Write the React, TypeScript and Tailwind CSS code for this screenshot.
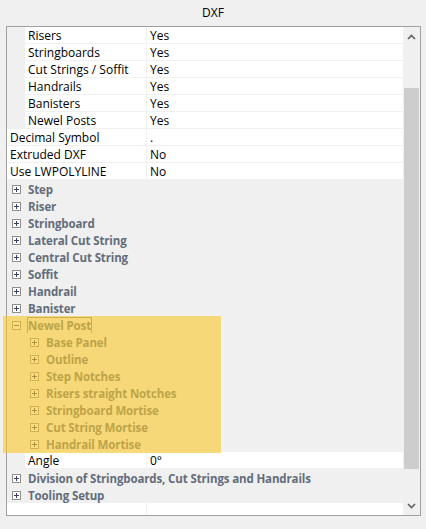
import React from "react";

type Row =
  | { kind: "prop"; name: string; value: string; indent: boolean }
  | { kind: "cat"; name: string; level: number; expanded?: boolean; focus?: boolean }
  | { kind: "empty" };

const rows: Row[] = [
  { kind: "prop", name: "Risers", value: "Yes", indent: true },
  { kind: "prop", name: "Stringboards", value: "Yes", indent: true },
  { kind: "prop", name: "Cut Strings / Soffit", value: "Yes", indent: true },
  { kind: "prop", name: "Handrails", value: "Yes", indent: true },
  { kind: "prop", name: "Banisters", value: "Yes", indent: true },
  { kind: "prop", name: "Newel Posts", value: "Yes", indent: true },
  { kind: "prop", name: "Decimal Symbol", value: ".", indent: false },
  { kind: "prop", name: "Extruded DXF", value: "No", indent: false },
  { kind: "prop", name: "Use LWPOLYLINE", value: "No", indent: false },
  { kind: "cat", name: "Step", level: 0 },
  { kind: "cat", name: "Riser", level: 0 },
  { kind: "cat", name: "Stringboard", level: 0 },
  { kind: "cat", name: "Lateral Cut String", level: 0 },
  { kind: "cat", name: "Central Cut String", level: 0 },
  { kind: "cat", name: "Soffit", level: 0 },
  { kind: "cat", name: "Handrail", level: 0 },
  { kind: "cat", name: "Banister", level: 0 },
  { kind: "cat", name: "Newel Post", level: 0, expanded: true, focus: true },
  { kind: "cat", name: "Base Panel", level: 1 },
  { kind: "cat", name: "Outline", level: 1 },
  { kind: "cat", name: "Step Notches", level: 1 },
  { kind: "cat", name: "Risers straight Notches", level: 1 },
  { kind: "cat", name: "Stringboard Mortise", level: 1 },
  { kind: "cat", name: "Cut String Mortise", level: 1 },
  { kind: "cat", name: "Handrail Mortise", level: 1 },
  { kind: "prop", name: "Angle", value: "0°", indent: true },
  { kind: "cat", name: "Division of Stringboards, Cut Strings and Handrails", level: 0 },
  { kind: "cat", name: "Tooling Setup", level: 0 },
  { kind: "empty" },
];

function ExpandBox({ expanded }: { expanded?: boolean }) {
  return (
    <svg width="9" height="9" viewBox="0 0 9 9" className="mt-[1px] shrink-0">
      <rect x="0.5" y="0.5" width="8" height="8" fill="#ffffff" stroke="#8f8f8f" />
      <line x1="2" y1="4.5" x2="7" y2="4.5" stroke="#3a3f66" />
      {!expanded && <line x1="4.5" y1="2" x2="4.5" y2="7" stroke="#3a3f66" />}
    </svg>
  );
}

function GridRow({ row }: { row: Row }) {
  if (row.kind === "prop") {
    return (
      <div className="flex h-[17px] shrink-0">
        {row.indent && <div className="w-[18px] shrink-0 bg-[#f0f0f0]" />}
        <div
          className={`${row.indent ? "w-[122px]" : "w-[140px]"} shrink-0 border-b border-r border-[#f0f0f0] bg-white pl-[3px] pt-[1px] text-[12px] leading-[16px] text-black`}
        >
          {row.name}
        </div>
        <div className="flex-1 border-b border-[#f0f0f0] bg-white pl-[3px] pt-[1px] text-[12px] leading-[16px] text-black">
          {row.value}
        </div>
      </div>
    );
  }
  if (row.kind === "empty") {
    return (
      <div className="flex flex-1">
        <div className="w-[140px] shrink-0 border-r border-[#f0f0f0] bg-white" />
        <div className="flex-1 bg-white" />
      </div>
    );
  }
  return (
    <div
      className={`flex h-[17px] shrink-0 items-center bg-[#f0f0f0] pt-[1px] ${row.level === 1 ? "pl-[23px]" : "pl-[5px]"}`}
    >
      <ExpandBox expanded={row.expanded} />
      <span
        className={`whitespace-nowrap text-[11.5px] font-bold leading-[15px] tracking-[-0.13px] text-[#636d7b] ${row.focus ? "ml-[6px] border border-[#8a8a8a]" : "ml-[7px]"}`}
      >
        {row.name}
      </span>
    </div>
  );
}

export default function App() {
  return (
    <div
      className="relative h-[529px] w-[426px] overflow-hidden bg-[#f0f0f0]"
      style={{ fontFamily: '"Open Sans", "Noto Sans", sans-serif' }}
    >
      <div className="flex h-[26px] items-center justify-center pb-[1px] text-[12px] text-black">DXF</div>
      <div className="ml-[6px] flex h-[490px] w-[415px] border border-[#a0a0a0] bg-white">
        <div className="flex w-[396px] flex-col">
          {rows.map((r, i) => (
            <GridRow key={i} row={r} />
          ))}
        </div>
        <div className="flex w-[17px] flex-col bg-[#f0f0f0]">
          <div className="flex h-[17px] items-center justify-center pt-[2px]">
            <svg width="9" height="6" viewBox="0 0 9 6">
              <path d="M1 5 L4.5 1.5 L8 5" fill="none" stroke="#606060" strokeWidth="1.6" />
            </svg>
          </div>
          <div className="h-[44px]" />
          <div className="mx-[1px] h-[381px] bg-[#cdcdcd]" />
          <div className="flex-1" />
          <div className="flex h-[17px] items-center justify-center pb-[2px]">
            <svg width="9" height="6" viewBox="0 0 9 6">
              <path d="M1 1 L4.5 4.5 L8 1" fill="none" stroke="#606060" strokeWidth="1.6" />
            </svg>
          </div>
        </div>
      </div>
      <div className="pointer-events-none absolute left-[3px] top-[316px] h-[137px] w-[218px] bg-[rgba(250,200,40,0.6)]" />
    </div>
  );
}
